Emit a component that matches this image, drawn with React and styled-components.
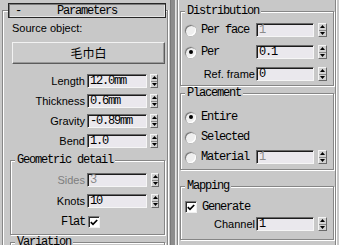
import React from "react";
import styled, { createGlobalStyle } from "styled-components";

const BG = "#c8c8c8";
const MONO = `"Liberation Mono", "Courier New", monospace`;
const SANS = `"Liberation Sans", Arial, sans-serif`;
const CJK = `"Noto Sans CJK SC", "Liberation Sans", sans-serif`;

const Global = createGlobalStyle`
  *, *::before, *::after { box-sizing: border-box; }
  html, body { margin: 0; padding: 0; background: ${BG}; }
  body { width: 339px; height: 245px; overflow: hidden; font-family: ${SANS}; }
`;

const Frame = styled.div`
  display: flex;
  width: 339px;
  height: 245px;
  overflow: hidden;
  background: ${BG};
`;

const LeftCol = styled.div`
  width: 169px;
  flex: none;
  padding: 10px 0 0 2px;
  display: flex;
`;

const RightCol = styled.div`
  width: 162px;
  flex: none;
  display: flex;
`;

const Rollout = styled.div`
  width: ${(p) => p.$w}px;
  flex: none;
  border: 1px solid #868686;
  border-bottom: none;
  ${(p) => (p.$open ? "border-top: none;" : "")}
  box-shadow: ${(p) => (p.$open ? "inset 1px 0 0 #fff" : "inset 1px 1px 0 #fff")}, 1px 0 0 #fff;
  display: flex;
  flex-direction: column;
  & > * { flex-shrink: 0; }
`;

const Separator = styled.div`
  width: 8px;
  flex: none;
  display: flex;
  padding-left: 1px;
`;

const SepBar = styled.div`
  width: 6px;
  background: #8c8c8c;
  border-left: 1px solid #787878;
  border-right: 1px solid #e4e4e4;
`;

const Header = styled.div`
  margin: -8px 1px 0 5px;
  height: 15px;
  border: 1px solid #262626;
  box-shadow: inset 1px 1px 0 #7c7c7c, inset -1px -1px 0 #e6e6e6;
  background: ${BG};
  display: flex;
  align-items: center;
  font: 12px/12px ${MONO};
  letter-spacing: -1.2px;
  color: #000;
`;

const HeaderDash = styled.span`
  padding-left: 6px;
  width: 30px;
`;

const HeaderTitle = styled.span`
  flex: 1;
  text-align: center;
  padding-right: 30px;
`;

const SourceLabel = styled.div`
  margin: 3px 0 0 9px;
  font: 11px/14px ${SANS};
  color: #000;
`;

const PickButton = styled.div`
  margin: 7px 2px 0 9px;
  height: 22px;
  border: 1px solid;
  border-color: #f2f2f2 #5c5c5c #5c5c5c #f2f2f2;
  box-shadow: inset -1px -1px 0 #9a9a9a;
  background: #cbcbcb;
  display: flex;
  align-items: center;
  justify-content: center;
  font: 12px/14px ${CJK};
  color: #000;
`;

const Stack = styled.div`
  display: flex;
  flex-direction: column;
  gap: ${(p) => p.$gap}px;
  margin-top: ${(p) => p.$mt || 0}px;
`;

const Row = styled.div`
  display: flex;
  align-items: center;
  height: 14px;
  flex: none;
`;

const Lead = styled.div`
  width: ${(p) => p.$w}px;
  flex: none;
  display: flex;
  align-items: center;
  justify-content: ${(p) => (p.$right ? "flex-end" : "flex-start")};
  padding-left: ${(p) => p.$pl || 0}px;
  height: 14px;
`;

const Label = styled.span`
  font: 11px/14px ${SANS};
  color: ${(p) => (p.$dim ? "#7e7e7e" : "#000")};
  white-space: nowrap;
`;

const MonoLabel = styled.span`
  font: 12px/14px ${MONO};
  letter-spacing: -1.2px;
  color: #000;
  white-space: nowrap;
  margin-left: ${(p) => p.$ml || 0}px;
`;

const Field = styled.div`
  width: ${(p) => p.$w}px;
  height: 14px;
  margin-left: ${(p) => p.$ml}px;
  flex: none;
  background: #eae8ed;
  border-top: 1px solid #6a6a6a;
  border-left: 1px solid #6a6a6a;
  border-right: 1px solid #f6f6f6;
  border-bottom: 1px solid #f6f6f6;
  box-shadow: inset 1px 1px 0 #1c1c1c;
  padding-left: 2px;
  font: 12px/12px ${MONO};
  letter-spacing: -1.2px;
  color: ${(p) => (p.$dim ? "#8a8a8a" : "#000")};
  white-space: nowrap;
  overflow: hidden;
`;

const SpinBox = styled.div`
  width: ${(p) => p.$w}px;
  height: 14px;
  margin-left: ${(p) => p.$ml}px;
  flex: none;
  display: flex;
  flex-direction: column;
  background: #d2d2d2;
  border: 1px solid;
  border-color: #f4f4f4 #6a6a6a #6a6a6a #f4f4f4;
`;

const SpinHalf = styled.div`
  flex: 1;
  display: flex;
  align-items: center;
  justify-content: center;
  ${(p) => (p.$top ? "border-bottom: 1px solid #8a8a8a;" : "")}
`;

const Spinner = ({ w = 8, ml = 3 }) => (
  <SpinBox $w={w} $ml={ml}>
    <SpinHalf $top>
      <svg width="5" height="3" viewBox="0 0 5 3">
        <path d="M2.5 0 L5 3 L0 3 Z" fill="#000" />
      </svg>
    </SpinHalf>
    <SpinHalf>
      <svg width="5" height="3" viewBox="0 0 5 3">
        <path d="M0 0 L5 0 L2.5 3 Z" fill="#000" />
      </svg>
    </SpinHalf>
  </SpinBox>
);

const Radio = styled.span`
  width: 11px;
  height: 11px;
  flex: none;
  border-radius: 50%;
  background: #efefef;
  box-shadow: inset 1px 1px 0 #7a7a7a, inset -1px -1px 0 #ffffff, 0 0 0 0.5px #b0b0b0;
  display: flex;
  align-items: center;
  justify-content: center;
  &::after {
    content: "";
    width: 4px;
    height: 4px;
    border-radius: 50%;
    background: ${(p) => (p.$on ? "#000" : "transparent")};
  }
`;

const CheckBox = styled.span`
  width: ${(p) => p.$s}px;
  height: ${(p) => p.$s}px;
  flex: none;
  margin-left: ${(p) => p.$ml || 0}px;
  background: #fff;
  border-top: 1px solid #7a7a7a;
  border-left: 1px solid #7a7a7a;
  border-right: 1px solid #f0f0f0;
  border-bottom: 1px solid #f0f0f0;
  box-shadow: inset 1px 1px 0 #2a2a2a;
  display: flex;
  align-items: center;
  justify-content: center;
`;

const Check = () => (
  <svg width="8" height="7" viewBox="0 0 8 7">
    <path d="M0.8 3.2 L3 5.4 L7.2 1" stroke="#000" strokeWidth="1.7" fill="none" />
  </svg>
);

const Group = styled.div`
  position: relative;
  flex: none;
  margin: ${(p) => p.$mt}px ${(p) => p.$mr}px 0 ${(p) => p.$ml}px;
  padding: ${(p) => p.$pt}px 0 ${(p) => p.$pb}px;
  border: 1px solid #868686;
  box-shadow: inset 1px 1px 0 #fff, 1px 1px 0 #fff;
  display: flex;
  flex-direction: column;
  gap: ${(p) => p.$gap || 0}px;
`;

const GroupTitle = styled.span`
  position: absolute;
  top: -7px;
  left: 4px;
  padding: 0 2px;
  background: ${BG};
  font: 12px/12px ${MONO};
  letter-spacing: -1.2px;
  color: #000;
  white-space: nowrap;
`;

const ParamRow = ({ label, value, lead, fieldMl = 2, spinMl = 3, dim }) => (
  <Row>
    <Lead $w={lead} $right>
      <Label $dim={dim}>{label}</Label>
    </Lead>
    <Field $w={60} $ml={fieldMl} $dim={dim}>{value}</Field>
    <Spinner w={8} ml={spinMl} />
  </Row>
);

const RightField = ({ value, dim }) => (
  <>
    <Field $w={58} $ml={1} $dim={dim}>{value}</Field>
    <Spinner w={9} ml={4} />
  </>
);

export default function App() {
  return (
    <>
      <Global />
      <Frame>
        <LeftCol>
          <Rollout $w={166}>
            <Header>
              <HeaderDash>-</HeaderDash>
              <HeaderTitle>Parameters</HeaderTitle>
            </Header>
            <SourceLabel>Source object:</SourceLabel>
            <PickButton>毛巾白</PickButton>
            <Stack $gap={6} $mt={10}>
              <ParamRow label="Length" value="12.0mm" lead={82} />
              <ParamRow label="Thickness" value="0.6mm" lead={82} />
              <ParamRow label="Gravity" value="-0.89mm" lead={82} />
              <ParamRow label="Bend" value="1.0" lead={82} />
            </Stack>
            <Group $mt={12} $mr={2} $ml={7} $pt={12} $pb={5}>
              <GroupTitle>Geometric detail</GroupTitle>
              <Stack $gap={7}>
                <ParamRow label="Sides" value="3" lead={74} spinMl={4} dim />
                <ParamRow label="Knots" value="10" lead={74} spinMl={4} />
                <Row>
                  <Lead $w={74} $right>
                    <MonoLabel>Flat</MonoLabel>
                  </Lead>
                  <CheckBox $s={12} $ml={3}>
                    <Check />
                  </CheckBox>
                </Row>
              </Stack>
            </Group>
            <Group $mt={7} $mr={2} $ml={7} $pt={20} $pb={0}>
              <GroupTitle>Variation</GroupTitle>
            </Group>
          </Rollout>
        </LeftCol>
        <Separator>
          <SepBar />
        </Separator>
        <RightCol>
          <Rollout $w={159} $open>
            <Group $mt={11} $mr={1} $ml={2} $pt={11} $pb={4} $gap={8}>
              <GroupTitle>Distribution</GroupTitle>
              <Row>
                <Lead $w={74} $pl={4}>
                  <Radio />
                  <MonoLabel $ml={5}>Per face</MonoLabel>
                </Lead>
                <RightField value="1" dim />
              </Row>
              <Row>
                <Lead $w={74} $pl={4}>
                  <Radio $on />
                  <MonoLabel $ml={5}>Per</MonoLabel>
                </Lead>
                <RightField value="0.1" />
              </Row>
              <Row>
                <Lead $w={74} $right>
                  <Label>Ref. frame</Label>
                </Lead>
                <RightField value="0" />
              </Row>
            </Group>
            <Group $mt={7} $mr={1} $ml={2} $pt={16} $pb={5} $gap={6}>
              <GroupTitle>Placement</GroupTitle>
              <Row>
                <Lead $w={74} $pl={4}>
                  <Radio $on />
                  <MonoLabel $ml={5}>Entire</MonoLabel>
                </Lead>
              </Row>
              <Row>
                <Lead $w={74} $pl={4}>
                  <Radio />
                  <MonoLabel $ml={5}>Selected</MonoLabel>
                </Lead>
              </Row>
              <Row>
                <Lead $w={74} $pl={4}>
                  <Radio />
                  <MonoLabel $ml={5}>Material</MonoLabel>
                </Lead>
                <RightField value="1" dim />
              </Row>
            </Group>
            <Group $mt={16} $mr={1} $ml={2} $pt={13} $pb={8} $gap={3}>
              <GroupTitle>Mapping</GroupTitle>
              <Row>
                <Lead $w={74} $pl={4}>
                  <CheckBox $s={12}>
                    <Check />
                  </CheckBox>
                  <MonoLabel $ml={5}>Generate</MonoLabel>
                </Lead>
              </Row>
              <Row>
                <Lead $w={74} $right>
                  <Label>Channel</Label>
                </Lead>
                <RightField value="1" />
              </Row>
            </Group>
          </Rollout>
        </RightCol>
      </Frame>
    </>
  );
}
